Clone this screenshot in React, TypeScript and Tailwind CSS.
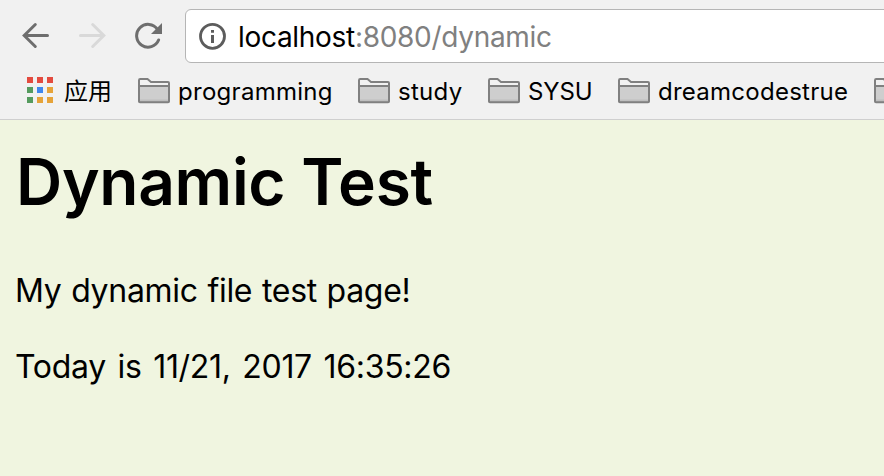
import React from "react";

const dots = [
  "bg-[#e34b3f]", "bg-[#e34b3f]", "bg-[#e34b3f]",
  "bg-[#559b5e]", "bg-[#3f87ee]", "bg-[#e6a339]",
  "bg-[#559b5e]", "bg-[#e6a339]", "bg-[#e6a339]",
];

const bookmarks = [
  { name: "programming", box: "w-[220px]", text: "tracking-[0.28px]" },
  { name: "study", box: "w-[130px]", text: "tracking-[0.3px]" },
  { name: "SYSU", box: "w-[130px]", text: "tracking-[-0.1px]" },
  { name: "dreamcodestrue", box: "w-[256px]", text: "tracking-[0.26px]" },
  { name: "", box: "w-[32px]", text: "" },
];

function Folder() {
  return (
    <svg width="32" height="26" viewBox="0 0 32 26" className="block shrink-0">
      <path d="M1 23.5V2.2Q1 1 2.2 1H9.5L13 4H30Q31 4 31 5V23.5Q31 25 29.5 25H2.5Q1 25 1 23.5Z" fill="#f1f1f1" />
      <path d="M1 8H31V24H1Z" fill="#cecece" />
      <path d="M2 21.5H30V24H2Z" fill="#bfbfbf" />
      <path d="M1 8H31M1 23.5V2.2Q1 1 2.2 1H9.5L13 4H30Q31 4 31 5V23.5Q31 24.3 30 24.3H2Q1 24.3 1 23.5Z" fill="none" stroke="#808080" strokeWidth="2" />
    </svg>
  );
}

export default function App() {
  return (
    <div className="flex h-[476px] w-[884px] flex-col overflow-hidden bg-[#f0f5e0] font-['Inter','Noto_Sans_CJK_SC',sans-serif] text-black">
      <header className="h-[120px] shrink-0 border-b border-[#cfcfcf] bg-[#f1f1f1]">
        <div className="flex h-16 pt-[9px]">
          <div className="flex w-[185px] shrink-0 pt-[13px] pl-[22px]">
            <svg width="28" height="27" viewBox="0 0 28 27" fill="none" stroke="#6e6e6e" strokeWidth="3" strokeLinecap="round">
              <path d="M25.5 13.5H3M13.3 2.5L2.2 13.5L13.3 24.5" />
            </svg>
            <svg width="28" height="27" viewBox="0 0 28 27" fill="none" stroke="#d9d9d9" strokeWidth="3" strokeLinecap="round" className="ml-7">
              <path d="M2.5 13.5H25M14.7 2.5L25.8 13.5L14.7 24.5" />
            </svg>
            <svg width="28" height="27" viewBox="0 0 28 27" className="ml-7">
              <path d="M23.5 7.4A11.4 11.4 0 1 0 24.6 18" fill="none" stroke="#6e6e6e" strokeWidth="3" strokeLinecap="round" />
              <path d="M28 1V12H17Z" fill="#6e6e6e" />
            </svg>
          </div>
          <div className="flex h-[54px] w-[710px] shrink-0 items-center rounded-[6px] border border-[#b5b5b5] bg-white pl-[13px]">
            <svg width="28" height="28" viewBox="0 0 28 28" className="shrink-0">
              <circle cx="13.5" cy="14.3" r="12" fill="none" stroke="#5c5c5c" strokeWidth="2.8" />
              <path d="M12 8H15V10.8H12ZM12 13H15V21H12Z" fill="#5c5c5c" />
            </svg>
            <span className="mt-[2px] ml-[11px] whitespace-nowrap text-[28px] leading-[34px] tracking-[-0.3px]">
              localhost<span className="text-[#808080]">:8080/dynamic</span>
            </span>
          </div>
        </div>
        <nav className="flex h-[55px] items-start pl-[27px]">
          <div className="mt-[13px] grid shrink-0 grid-cols-[6px_6px_6px] gap-x-[4px] gap-y-[4px]">
            {dots.map((color, i) => (
              <i key={i} className={"size-[6px] " + color} />
            ))}
          </div>
          <span className="ml-[11px] mt-[10px] w-[74px] shrink-0 text-[24px] leading-[36px]">应用</span>
          {bookmarks.map((item) => (
            <div key={item.name} className={"mt-[14px] flex shrink-0 " + item.box}>
              <Folder />
              <span className={"-mt-[3px] ml-2 whitespace-nowrap text-[24px] leading-[34px] " + item.text}>{item.name}</span>
            </div>
          ))}
        </nav>
      </header>
      <main className="pl-[15px]">
        <h1 className="mt-[22px] pl-px whitespace-nowrap text-[64px] leading-[80px] font-semibold tracking-[-0.3px]">Dynamic Test</h1>
        <p className="mt-[47px] whitespace-nowrap text-[32px] leading-[44px] tracking-[-0.3px] [word-spacing:1px]">My dynamic file test page!</p>
        <p className="mt-[32px] whitespace-nowrap text-[32px] leading-[44px] tracking-[-0.3px] [word-spacing:2.9px]">Today is 11/21, 2017 16:35:26</p>
      </main>
    </div>
  );
}
